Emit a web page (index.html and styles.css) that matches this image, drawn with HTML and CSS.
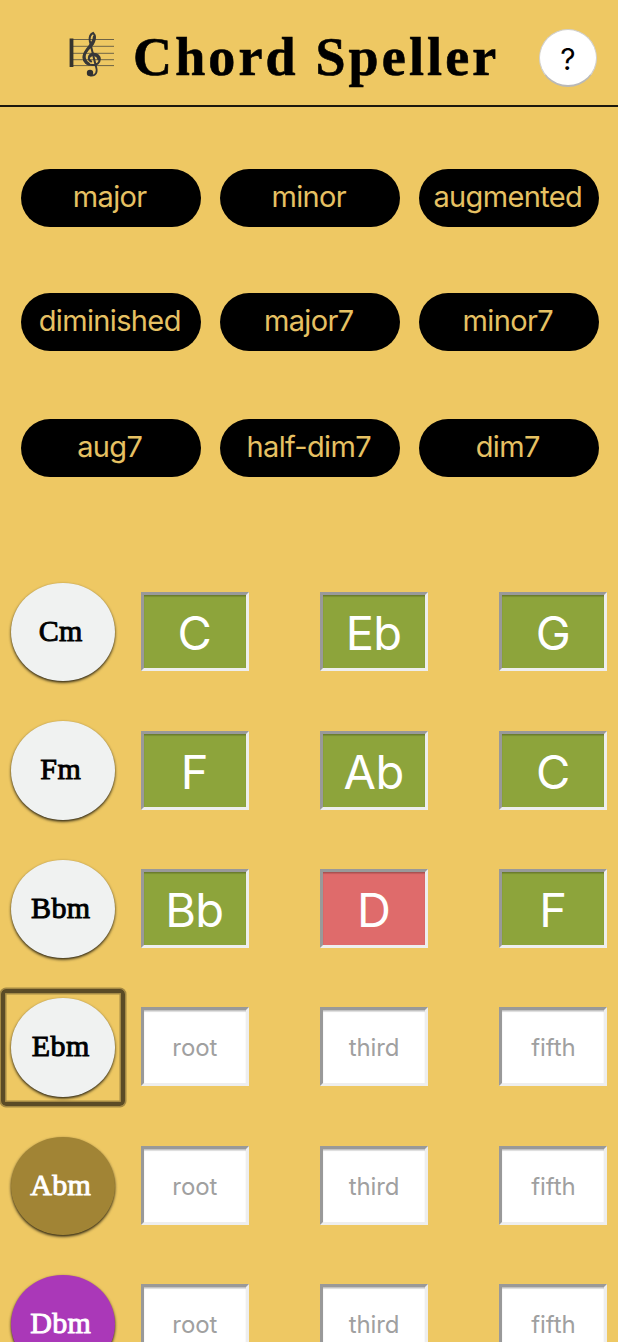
FILE: index.html
```html
<!DOCTYPE html>
<html lang="en">
<head>
<meta charset="utf-8">
<title>Chord Speller</title>
<link rel="stylesheet" href="styles.css">
</head>
<body>
<header class="header">
  <svg class="clef" viewBox="0 0 46 46" width="46" height="46" aria-hidden="true">
    <path d="M4 8.5H45M4 15.3H45M4 22.3H45M4 28.7H45M4 34.6H45" stroke="#6d6345" stroke-width="1"/>
    <path d="M2.500 7.500V36" stroke="#36342d" stroke-width="3.800"/>
    <g fill="none" stroke="#383838" stroke-linecap="round">
      <path d="M26.800 35L20.800 10C20.200 6 21.800 3 24.200 2C26.500 4 26.500 9 24 13C21 17.500 14.500 20.500 14.500 26.500C14.500 31 18.500 34 23.500 34C28 34 30.800 31.500 30.800 28.300C30.800 25 28 22.800 24.800 22.800C21.500 22.800 19.800 25 19.800 27C19.800 28.800 20.800 30 22.200 30.500" stroke-width="2"/>
      <path d="M25.300 6C25.500 13 16 18 15.200 25C15 29 17 31.500 19.500 32.800" stroke-width="3"/>
      <path d="M21 25C23 22.500 29 23.500 29.800 28" stroke-width="3"/>
      <path d="M26.800 35C29 41 27 45 21.800 44.600" stroke-width="1.800"/>
    </g>
    <circle cx="21" cy="42" r="3.200" fill="#303030"/>
  </svg>
  <h1 class="title">Chord Speller</h1>
  <button class="help">?</button>
</header>
<main>
  <nav class="types">
    <button class="type">major</button><button class="type">minor</button><button class="type">augmented</button>
    <button class="type">diminished</button><button class="type">major7</button><button class="type">minor7</button>
    <button class="type">aug7</button><button class="type">half-dim7</button><button class="type">dim7</button>
  </nav>
  <section class="chords">
    <div class="row"><div class="chord">Cm</div><div class="note right">C</div><div class="note right">Eb</div><div class="note right">G</div></div>
    <div class="row"><div class="chord">Fm</div><div class="note right">F</div><div class="note right">Ab</div><div class="note right">C</div></div>
    <div class="row"><div class="chord">Bbm</div><div class="note right">Bb</div><div class="note wrong">D</div><div class="note right">F</div></div>
    <div class="row"><div class="chord current">Ebm</div><div class="note">root</div><div class="note">third</div><div class="note">fifth</div></div>
    <div class="row"><div class="chord gold">Abm</div><div class="note">root</div><div class="note">third</div><div class="note">fifth</div></div>
    <div class="row"><div class="chord purple">Dbm</div><div class="note">root</div><div class="note">third</div><div class="note">fifth</div></div>
  </section>
</main>
</body>
</html>
```
FILE: styles.css
```css
* { box-sizing: border-box; }
html, body { height: 100%; }
body {
  margin: 0;
  overflow: hidden;
  background: #eec863;
  font-family: Inter, sans-serif;
}
main { height: 1235px; overflow: hidden; }
button { border: 0; padding: 0; font-family: inherit; }
.header {
  display: flex;
  align-items: flex-start;
  height: 107px;
  padding: 29px 21px 0 69px;
  border-bottom: 2px solid #1c180c;
}
.clef { margin-top: 2px; flex: none; }
.title {
  margin: -3px 0 0 18px;
  width: 407px;
  font: bold 54px/62px "Liberation Serif", serif;
  letter-spacing: 3.150px;
  -webkit-text-stroke: .6px #000;
  white-space: nowrap;
}
.help {
  flex: none;
  width: 58px;
  height: 58px;
  border: 1px solid #d0cfcc;
  border-bottom: 2px solid #b9b9b9;
  border-radius: 50%;
  background: #fff;
  color: #000;
  font-size: 30px;
  line-height: 58px;
}
.types {
  display: grid;
  grid-template-columns: repeat(3, 179.500px);
  column-gap: 19.500px;
  grid-template-rows: 124.500px 126px 58px;
  align-items: start;
  padding: 61.600px 0 0 21px;
}
.type {
  height: 58px;
  border-radius: 29px;
  background: #000;
  color: #e6c163;
  font-size: 29px;
  letter-spacing: -.65px;
  line-height: 55px;
  padding: 0 2px 4px 0;
}
.chords { padding: 105.900px 0 0 11px; }
.row {
  display: grid;
  grid-template-columns: 58.500px 108px 108px 108px;
  column-gap: 71.300px;
  align-items: center;
  height: 98.400px;
  margin-bottom: 40px;
}
.chord {
  width: 103.500px;
  height: 98.400px;
  border-radius: 50%;
  background: #f0f2f1;
  color: #000;
  box-shadow: 0 1.500px 3px rgba(0, 0, 0, .85);
  font: 30px/96px "Liberation Serif", serif;
  letter-spacing: .4px;
  -webkit-text-stroke: .9px currentColor;
  text-align: center;
  padding-right: 4px;
}
.gold { background: #a18435; color: #fff; }
.purple { background: #aa38b8; color: #fff; }
.current { position: relative; }
.current::after {
  content: "";
  position: absolute;
  inset: -9.500px -10px -9px -10px;
  border: 4px solid #5b4b26;
  border-radius: 5px;
  box-shadow: 0 0 0 1.500px rgba(91, 75, 38, .5), inset 0 0 0 1.500px rgba(91, 75, 38, .5);
}
.note {
  height: 79px;
  margin-top: -.8px;
  border: 3px solid;
  border-color: #999 #eee #eee #999;
  background: #fff;
  box-shadow: inset 0 1.500px 1px rgba(0, 0, 0, .25);
  color: #a0a0a0;
  font-size: 24px;
  letter-spacing: -.1px;
  line-height: 76px;
  text-align: center;
}
.right, .wrong {
  padding-right: 1px;
  color: #fff;
  font-size: 47px;
  letter-spacing: -.6px;
}
.right { background: #8da43b; }
.wrong { background: #df6b6b; }
```
